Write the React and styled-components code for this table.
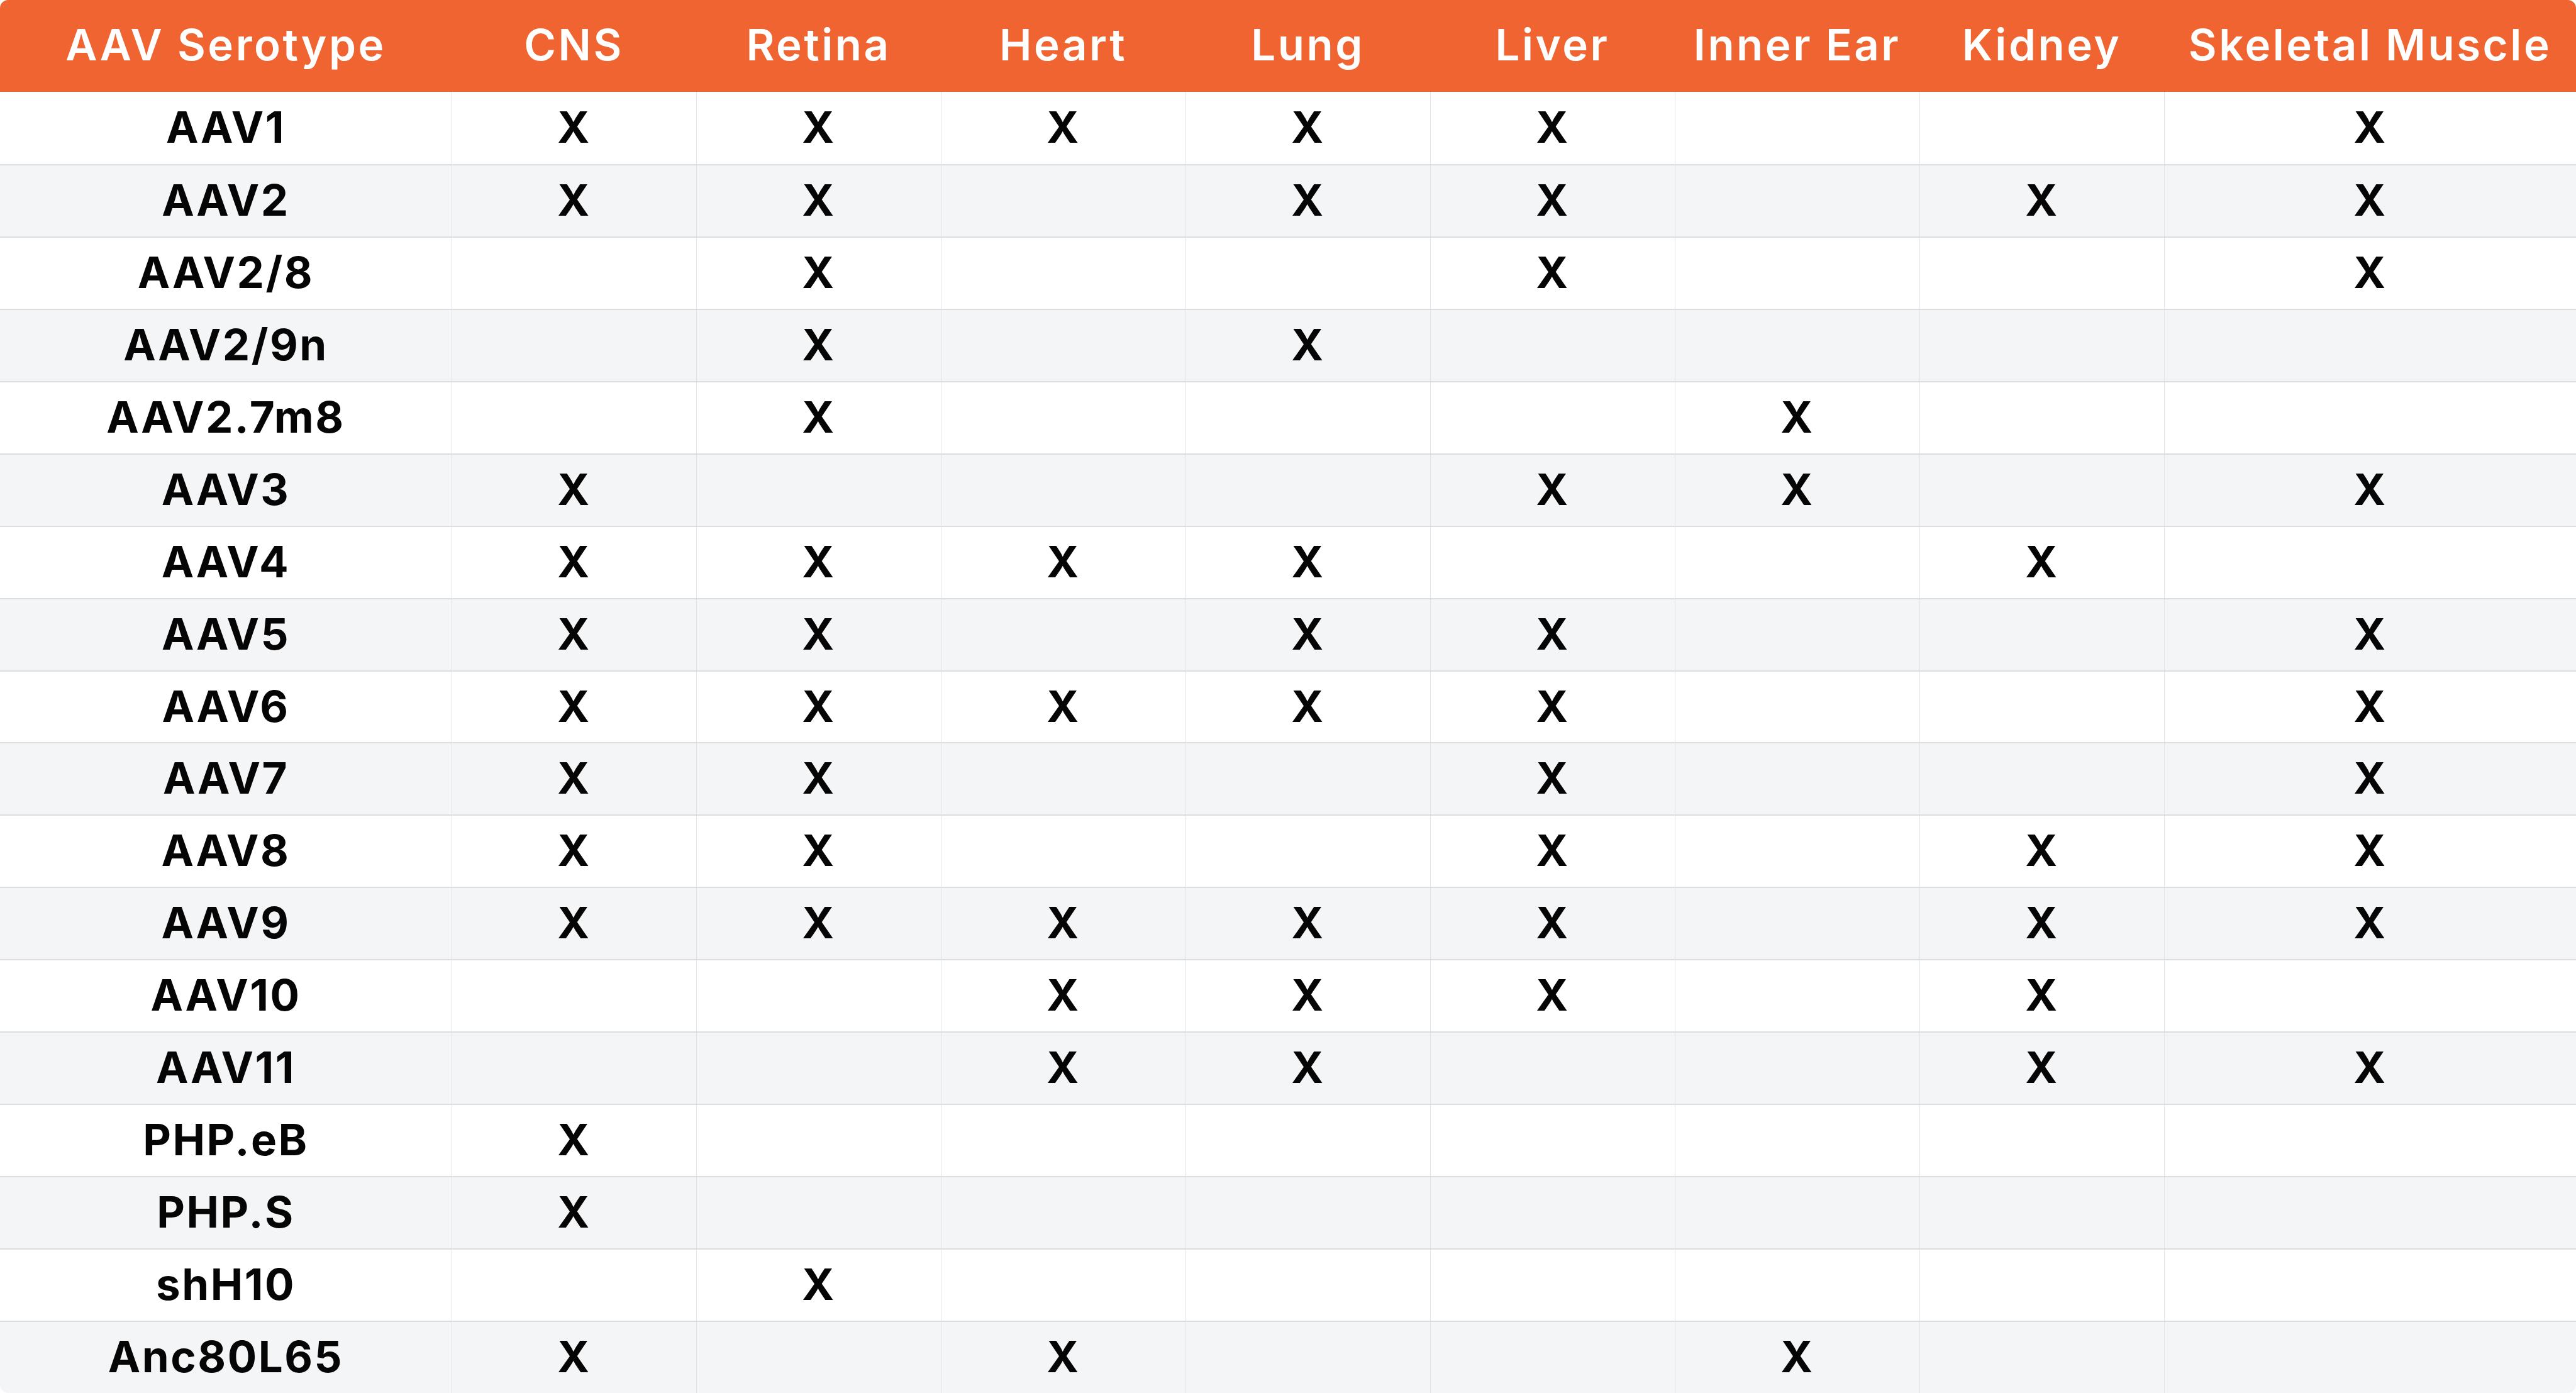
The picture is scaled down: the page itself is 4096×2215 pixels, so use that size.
import styled, { createGlobalStyle } from "styled-components";

const GlobalStyle = createGlobalStyle`
  html, body {
    margin: 0;
    padding: 0;
    background: #ffffff;
  }
  body {
    font-family: Inter, "Noto Sans", "Liberation Sans", sans-serif;
  }
`;

const COLUMNS = [
  "CNS",
  "Retina",
  "Heart",
  "Lung",
  "Liver",
  "Inner Ear",
  "Kidney",
  "Skeletal Muscle",
];

// one string per serotype, "x" = reported tropism, "." = none
const SEROTYPES = [
  ["AAV1", "xxxxx..x"],
  ["AAV2", "xx.xx.xx"],
  ["AAV2/8", ".x..x..x"],
  ["AAV2/9n", ".x.x...."],
  ["AAV2.7m8", ".x...x.."],
  ["AAV3", "x...xx.x"],
  ["AAV4", "xxxx..x."],
  ["AAV5", "xx.xx..x"],
  ["AAV6", "xxxxx..x"],
  ["AAV7", "xx..x..x"],
  ["AAV8", "xx..x.xx"],
  ["AAV9", "xxxxx.xx"],
  ["AAV10", "..xxx.x."],
  ["AAV11", "..xx..xx"],
  ["PHP.eB", "x......."],
  ["PHP.S", "x......."],
  ["shH10", ".x......"],
  ["Anc80L65", "x.x..x.."],
];

const GRID = "718px repeat(7, 389px) 1fr";

const Table = styled.div`
  display: grid;
  grid-template-rows: 146px repeat(18, 1fr);
  height: 2215px;
  width: 100%;
  border-radius: 13px;
  overflow: hidden;
  background: #ffffff;
`;

const HeaderRow = styled.div`
  display: grid;
  grid-template-columns: ${GRID};
  background: #f06432;
`;

const HeaderCell = styled.div`
  display: flex;
  align-items: center;
  justify-content: center;
  color: #ffffff;
  font-size: 69px;
  font-weight: 600;
  letter-spacing: 3.5px;
  white-space: nowrap;
  padding-bottom: 4px;
`;

const Row = styled.div`
  display: grid;
  grid-template-columns: ${GRID};
  background: ${(p) => (p.$striped ? "#f4f5f7" : "#ffffff")};
  border-top: ${(p) => (p.$first ? "none" : "2px solid #dcdde0")};
`;

const Cell = styled.div`
  display: flex;
  align-items: center;
  justify-content: center;
  color: #050505;
  font-size: 69px;
  font-weight: 650;
  letter-spacing: 2.5px;
  white-space: nowrap;
  padding-bottom: 3px;
  border-left: ${(p) => (p.$lead ? "none" : "1px solid #e2e3e6")};
`;

const App = () => {
  return (
    <>
      <GlobalStyle />
      <Table>
        <HeaderRow>
          <HeaderCell>AAV Serotype</HeaderCell>
          {COLUMNS.map((name) => (
            <HeaderCell key={name}>{name}</HeaderCell>
          ))}
        </HeaderRow>
        {SEROTYPES.map(([name, marks], i) => (
          <Row key={name} $striped={i % 2 === 1} $first={i === 0}>
            <Cell $lead>{name}</Cell>
            {marks.split("").map((m, j) => (
              <Cell key={j}>{m === "x" ? "X" : ""}</Cell>
            ))}
          </Row>
        ))}
      </Table>
    </>
  );
};

export default App;
